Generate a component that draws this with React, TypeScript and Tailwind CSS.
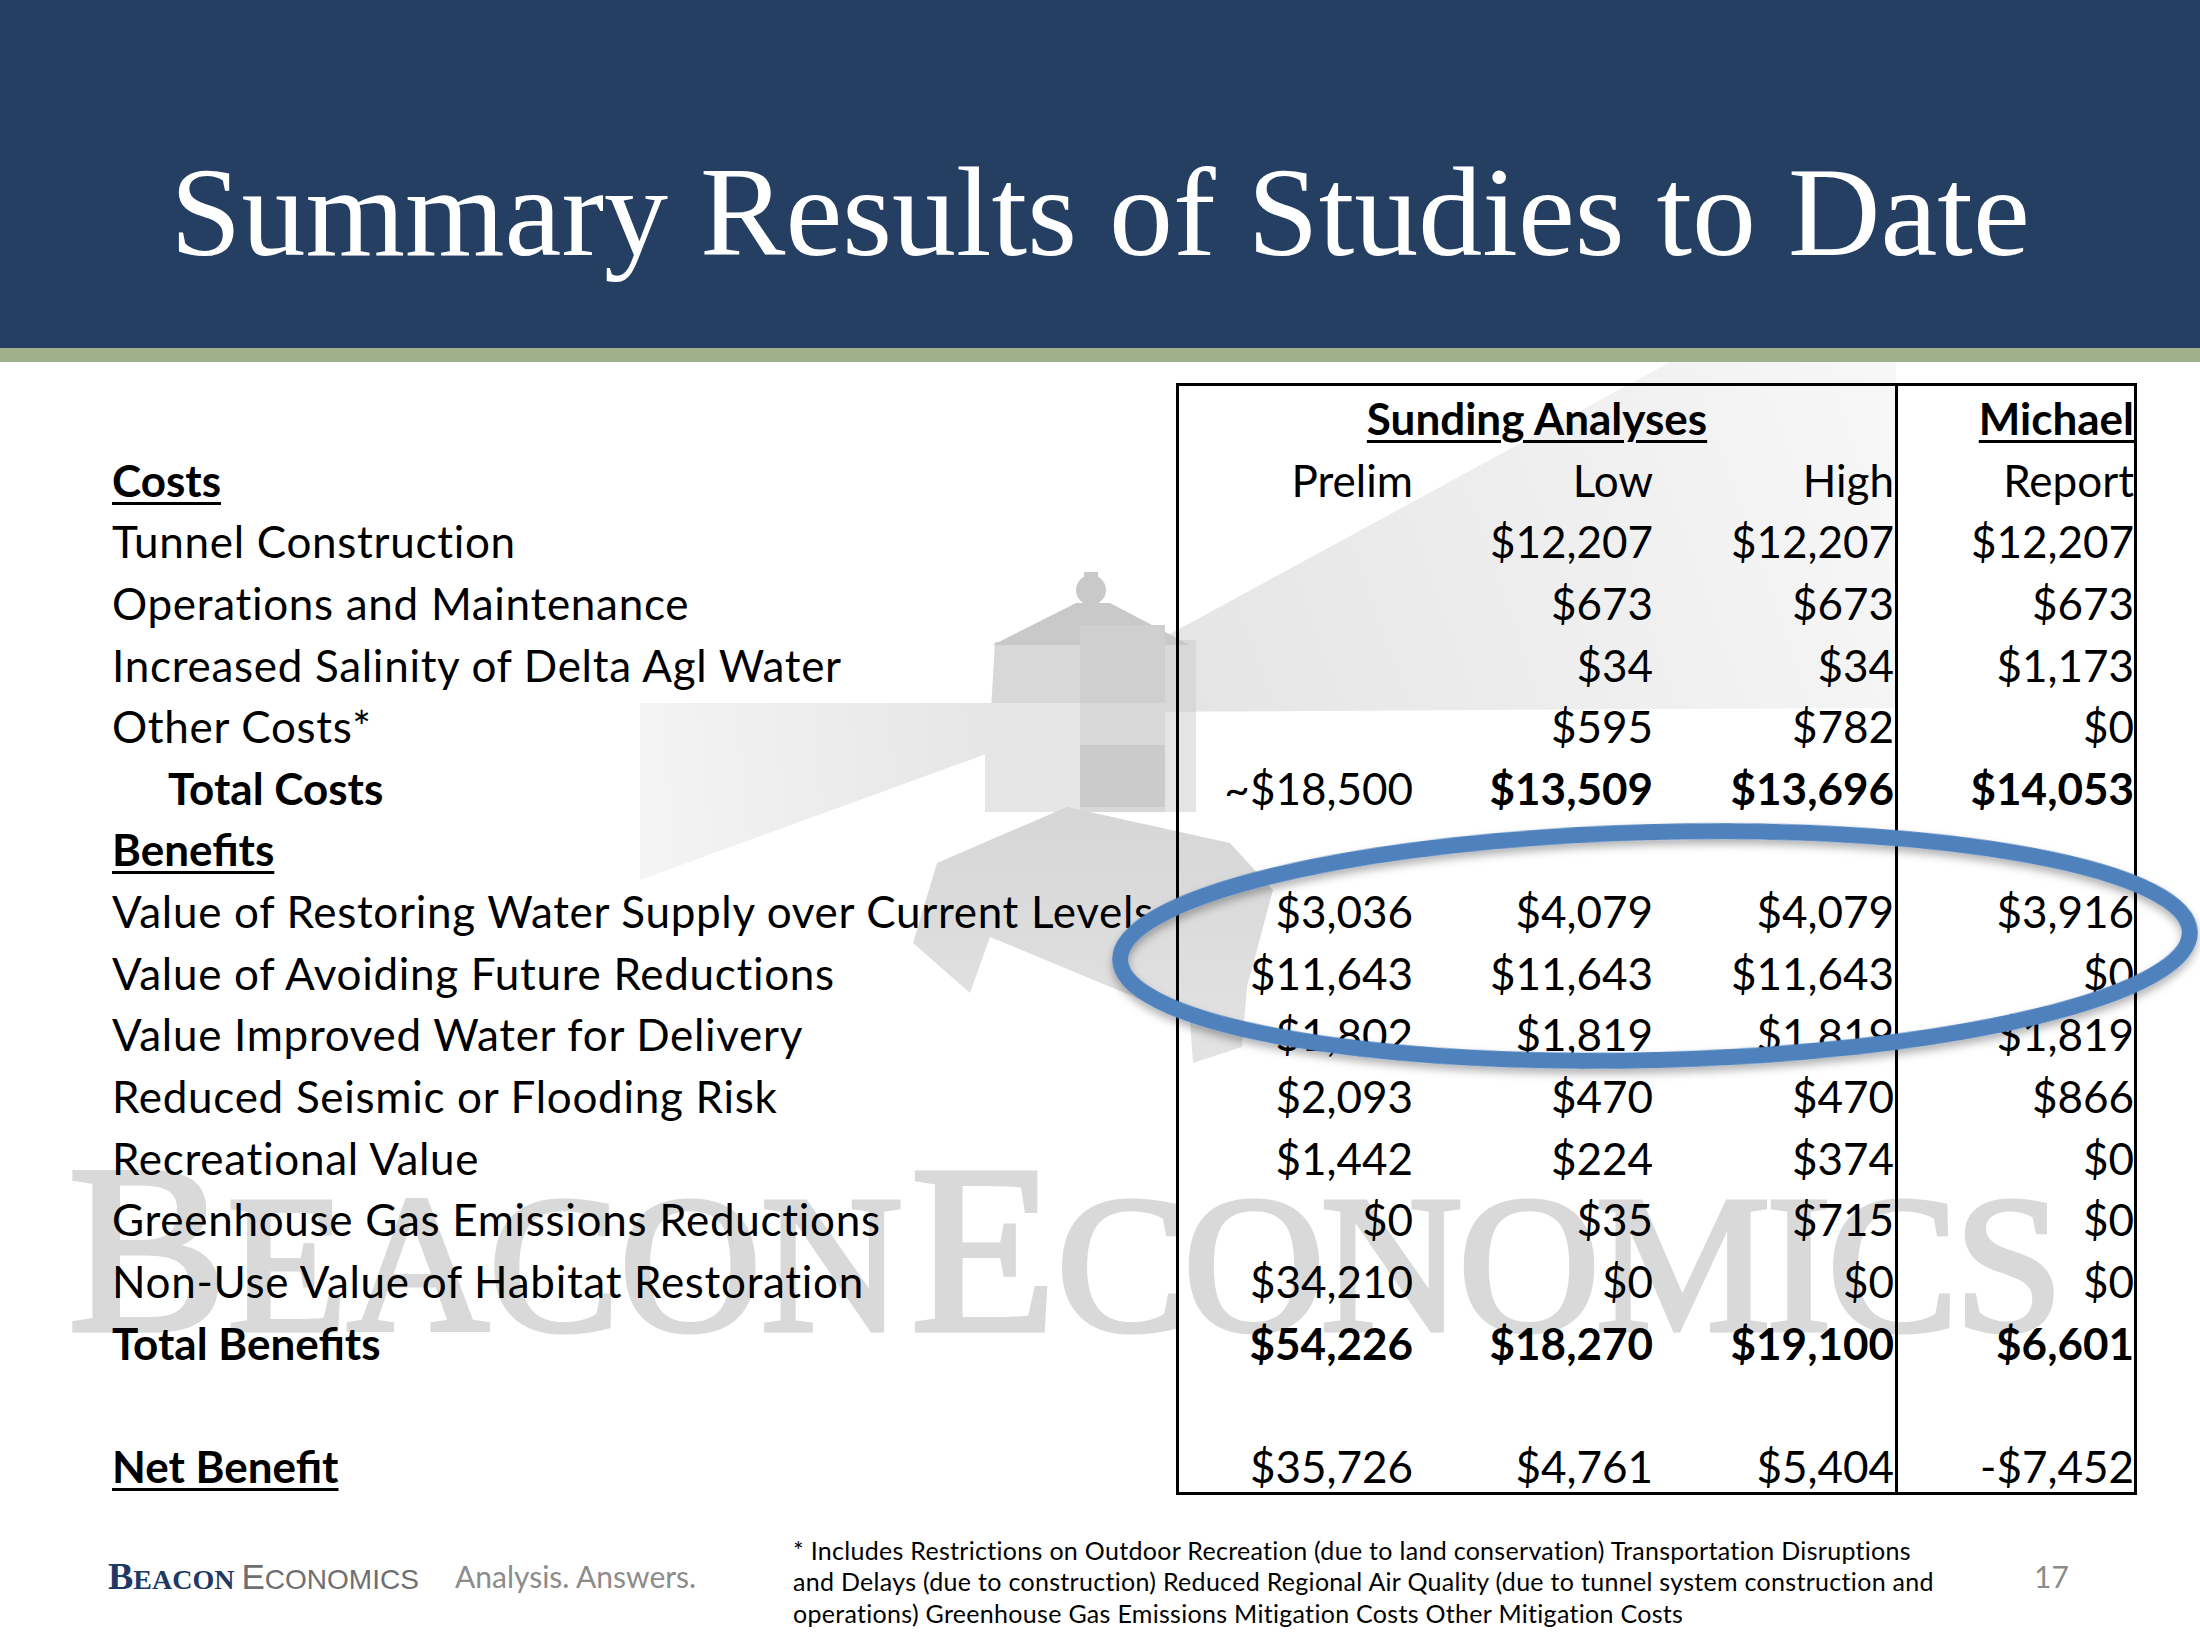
type Row = {
  label: string;
  kind?: "head" | "bold" | "indent";
  vals: string[];
  bold?: boolean[];
};

const rows: Row[] = [
  { label: "Costs", kind: "head", vals: ["Prelim", "Low", "High", "Report"] },
  { label: "Tunnel Construction", vals: ["", "$12,207", "$12,207", "$12,207"] },
  { label: "Operations and Maintenance", vals: ["", "$673", "$673", "$673"] },
  { label: "Increased Salinity of Delta Agl Water", vals: ["", "$34", "$34", "$1,173"] },
  { label: "Other Costs*", vals: ["", "$595", "$782", "$0"] },
  {
    label: "Total Costs",
    kind: "indent",
    vals: ["~$18,500", "$13,509", "$13,696", "$14,053"],
    bold: [false, true, true, true],
  },
  { label: "Benefits", kind: "head", vals: ["", "", "", ""] },
  { label: "Value of Restoring Water Supply over Current Levels", vals: ["$3,036", "$4,079", "$4,079", "$3,916"] },
  { label: "Value of Avoiding Future Reductions", vals: ["$11,643", "$11,643", "$11,643", "$0"] },
  { label: "Value Improved Water for Delivery", vals: ["$1,802", "$1,819", "$1,819", "$1,819"] },
  { label: "Reduced Seismic or Flooding Risk", vals: ["$2,093", "$470", "$470", "$866"] },
  { label: "Recreational Value", vals: ["$1,442", "$224", "$374", "$0"] },
  { label: "Greenhouse Gas Emissions Reductions", vals: ["$0", "$35", "$715", "$0"] },
  { label: "Non-Use Value of Habitat Restoration", vals: ["$34,210", "$0", "$0", "$0"] },
  {
    label: "Total Benefits",
    kind: "bold",
    vals: ["$54,226", "$18,270", "$19,100", "$6,601"],
    bold: [true, true, true, true],
  },
  { label: "", vals: ["", "", "", ""] },
  { label: "Net Benefit", kind: "head", vals: ["$35,726", "$4,761", "$5,404", "-$7,452"] },
];

const rowCls = "h-[61.65px] leading-[61.65px] whitespace-nowrap";

function Watermark() {
  return (
    <div className="absolute inset-0 z-0">
      <svg width="2200" height="1650" className="absolute left-0 top-0">
        <defs>
          <linearGradient id="beamR" x1="1100" y1="700" x2="1896" y2="420" gradientUnits="userSpaceOnUse">
            <stop offset="0" stopColor="#e3e3e3" />
            <stop offset="1" stopColor="#f7f7f7" />
          </linearGradient>
          <linearGradient id="beamL" x1="1090" y1="760" x2="640" y2="800" gradientUnits="userSpaceOnUse">
            <stop offset="0" stopColor="#e2e2e2" />
            <stop offset="1" stopColor="#f4f4f4" />
          </linearGradient>
          <linearGradient id="house" x1="1090" y1="806" x2="1090" y2="1066" gradientUnits="userSpaceOnUse">
            <stop offset="0" stopColor="#d6d6d6" />
            <stop offset="1" stopColor="#e3e3e3" />
          </linearGradient>
        </defs>
        {/* light beams */}
        <polygon points="1100,672 1670,362 1896,362 1896,708 1100,712" fill="url(#beamR)" />
        <polygon points="1085,703 640,703 640,880 1085,718" fill="url(#beamL)" />
        {/* lighthouse lantern */}
        <polygon points="995,642 1196,640 1196,812 985,812" fill="#d8d8d8" />
        <polygon points="985,703 1080,703 1080,812 985,812" fill="#e6e6e6" />
        <polygon points="993,645 1076,603 1110,603 1190,645" fill="#c9c9c9" />
        <rect x="1080" y="625" width="85" height="78" fill="#cfcfcf" />
        <rect x="1080" y="745" width="85" height="62" fill="#cbcbcb" />
        <rect x="1165" y="712" width="31" height="100" fill="#e4e4e4" />
        <circle cx="1091" cy="590" r="15" fill="#c9c9c9" />
        <rect x="1084" y="572" width="14" height="10" fill="#c9c9c9" />
        {/* base */}
        <polygon
          points="913,943 937,863 1067,807 1230,843 1273,890 1247,987 1242,1047 1193,1063 1190,1020 990,937 970,993"
          fill="url(#house)"
        />
      </svg>
      <div className="absolute left-[68px] top-[1130px] whitespace-nowrap font-['Liberation_Serif',serif] text-[239px] leading-[239px] text-[#d9d9d9] [-webkit-text-stroke:5px_#d9d9d9]">
        B<span className="text-[196px]">EACON</span>
        <span className="ml-[8px]">E</span>
        <span className="text-[196px] tracking-[-4px]">CONOMICS</span>
      </div>
    </div>
  );
}

function Ellipse() {
  return (
    <svg width="2200" height="1650" className="pointer-events-none absolute left-0 top-0 z-20">
      <defs>
        <filter id="sh" x="-10%" y="-30%" width="120%" height="160%">
          <feDropShadow dx="0" dy="5" stdDeviation="4" floodColor="#000" floodOpacity="0.3" />
        </filter>
      </defs>
      <ellipse
        cx="1655"
        cy="946"
        rx="535"
        ry="114"
        fill="none"
        stroke="#4f81bd"
        strokeWidth="16"
        filter="url(#sh)"
        transform="rotate(-1.5 1655 946)"
      />
    </svg>
  );
}

function Label({ row }: { row: Row }) {
  if (row.kind === "head")
    return (
      <div className={`${rowCls} font-bold`}>
        <span className="underline decoration-[3px] underline-offset-[5px]">{row.label}</span>
      </div>
    );
  if (row.kind === "indent") return <div className={`${rowCls} pl-[56px] font-bold`}>{row.label}</div>;
  if (row.kind === "bold") return <div className={`${rowCls} font-bold`}>{row.label}</div>;
  return <div className={`${rowCls} tracking-[0.7px]`}>{row.label}</div>;
}

export default function App() {
  return (
    <div className="relative h-[1650px] w-[2200px] overflow-hidden bg-white font-['Lato',sans-serif] text-black">
      <Watermark />
      <div className="relative z-10">
        <div className="h-[348px] bg-[#243f61] pt-[148px] text-center font-['Liberation_Serif',serif] text-[128px] leading-none text-white">
          Summary Results of Studies to Date
        </div>
        <div className="h-[14px] bg-[#a0b08b]" />

        <div className="flex pl-[112px] pt-[21px] text-[44px]">
          <div className="w-[1064px] pt-[5px]">
            <div className={rowCls} />
            {rows.map((r, i) => (
              <Label key={i} row={r} />
            ))}
          </div>

          <div className="flex h-[1112px] w-[961px] border-[3px] border-black">
            <div className="w-[716px] pt-[2px]">
              <div className={`${rowCls} text-center font-bold`}>
                <span className="underline decoration-[3px] underline-offset-[5px]">Sunding Analyses</span>
              </div>
              {rows.map((r, i) => (
                <div key={i} className="grid grid-cols-[236px_240px_240px]">
                  {r.vals.slice(0, 3).map((v, j) => (
                    <div
                      key={j}
                      className={`${rowCls} text-right ${j === 2 ? "pr-[1px]" : "pr-[2px]"} ${
                        r.bold && r.bold[j] ? "font-bold" : ""
                      }`}
                    >
                      {v}
                    </div>
                  ))}
                </div>
              ))}
            </div>
            <div className="flex-1 border-l-[3px] border-black pt-[2px]">
              <div className={`${rowCls} text-right font-bold`}>
                <span className="underline decoration-[3px] underline-offset-[5px]">Michael</span>
              </div>
              {rows.map((r, i) => (
                <div key={i} className={`${rowCls} text-right ${r.bold && r.bold[3] ? "font-bold" : ""}`}>
                  {r.vals[3]}
                </div>
              ))}
            </div>
          </div>
        </div>

        <div className="mt-[37px] flex h-[95px] items-center pl-[108px]">
          <div className="w-[347px] whitespace-nowrap pb-[12px]">
            <span className="font-['Liberation_Serif',serif] font-bold text-[#1f3864]">
              <span className="text-[38px]">B</span>
              <span className="text-[28px]">EACON</span>
            </span>
            <span className="ml-[7px] font-['Liberation_Sans',sans-serif] text-[#6f6f6f]">
              <span className="text-[35px]">E</span>
              <span className="text-[28px]">CONOMICS</span>
            </span>
          </div>
          <div className="w-[338px] pb-[12px] text-[30px] text-[#8c8c8c]">Analysis. Answers.</div>
          <div className="w-[1241px] whitespace-nowrap text-[25px] leading-[31.5px] tracking-[0.3px]">
            * Includes Restrictions on Outdoor Recreation (due to land conservation) Transportation Disruptions
            <br />
            and Delays (due to construction) Reduced Regional Air Quality (due to tunnel system construction and
            <br />
            operations) Greenhouse Gas Emissions Mitigation Costs Other Mitigation Costs
          </div>
          <div className="pb-[12px] text-[30px] text-[#8c8c8c]">17</div>
        </div>
      </div>
      <Ellipse />
    </div>
  );
}
